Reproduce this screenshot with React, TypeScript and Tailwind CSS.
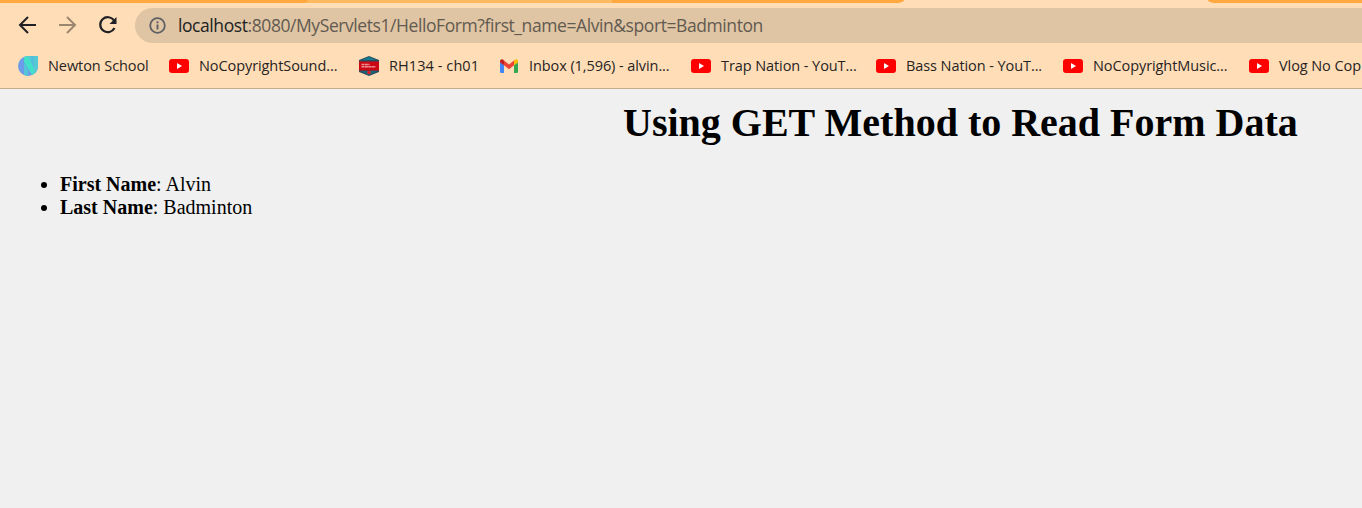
import type { ReactNode } from 'react';

function YouTubeIcon() {
  return (
    <svg width="20" height="20" viewBox="0 0 20 20">
      <rect x="0" y="3" width="20" height="14" rx="3" fill="#f00" />
      <path d="M8 7v6l5-3z" fill="#fff" />
    </svg>
  );
}

function NewtonIcon() {
  return (
    <svg width="20" height="20" viewBox="0 0 20 20">
      <path d="M10 0h10v10a10 10 0 1 1-10-10z" fill="#6c9be8" />
      <path d="M10 0h10v10a10 10 0 0 1-4 8z" fill="#55c8d4" />
      <path d="M6 1l4-1 6 13v5l-2 1L6 6z" fill="#42e0c8" />
      <path d="M6 6l4 8v6q-2 0-4-1z" fill="#52c5d8" />
      <path d="M13 0h3v12l-3-6z" fill="#52bfdc" />
    </svg>
  );
}

function BadgeIcon() {
  return (
    <svg width="20" height="20" viewBox="0 0 20 20">
      <path d="M10 0l10 4v12l-10 4-10-4V4z" fill="#264e60" />
      <path d="M10 1l7 3H3z" fill="#167c91" />
      <path d="M2 15h16l-8 4z" fill="#17677c" />
      <rect x="0" y="5.500" width="20" height="9" fill="#cc0815" />
      <path d="M2.500 8.500h8M2.500 10.700h14" stroke="#eb9296" strokeWidth="1.400" strokeDasharray="3 .4" />
      <circle cx="10" cy="16.500" r="1.800" fill="#e31c23" />
    </svg>
  );
}

function GmailIcon() {
  return (
    <svg width="20" height="20" viewBox="0 0 20 20">
      <path d="M1 6l4 3v8H2.300Q1 17 1 15.700z" fill="#4285f4" />
      <path d="M15 9l4-3v9.700q0 1.300-1.300 1.300H15z" fill="#34a853" />
      <path d="M5 4.500l5 4 5-4V9.300l-5 3.900-5-3.900z" fill="#ea4335" />
      <path d="M1 5.500C1 3 3.500 2.500 5 4.500v4.800L1 6.500z" fill="#c5221f" />
      <path d="M15 4.500c1.500-2 4-1.500 4 1v1l-4 2.800z" fill="#fbbc04" />
    </svg>
  );
}

function Bookmark({ icon, label, className }: { icon: ReactNode; label: string; className: string }) {
  return (
    <div className={`flex shrink-0 items-center whitespace-nowrap ${className}`}>
      <span className="mr-2.5 shrink-0">{icon}</span>
      <span>{label}</span>
    </div>
  );
}

export default function App() {
  return (
    <div className="flex h-[508px] w-full flex-col overflow-hidden bg-[#f0f0f0]">
      <header className="h-[89px] shrink-0 overflow-hidden border-b border-[#c8ab8a] bg-[#ffdeb7] font-['Open_Sans',sans-serif]">
        <div className="flex h-[3px] items-end overflow-hidden">
          <div className="h-[3px] w-[612px] shrink-0 bg-[#ffb95f]">
            <div className="h-[3px] w-[308px] rounded-br-[6px_3px] bg-[#ffa83f]" />
          </div>
          <div className="h-[3px] w-[292px] shrink-0 rounded-br-[7px_3px] bg-[#ffa83f]" />
          <div className="h-[3px] w-[304px] shrink-0" />
          <div className="h-[3px] grow rounded-bl-[7px_3px] bg-[#ffa83f]" />
        </div>
        <div className="flex h-[45px] items-center">
          <svg className="shrink-0" width="135" height="45" viewBox="0 3 135 45" fill="none">
            <path d="M36 25H20.500M28 17l-8 8 8 8" stroke="#202124" strokeWidth="2" />
            <path d="M59 25h15.500M67 17l8 8-8 8" stroke="#9b8770" strokeWidth="2" />
            <path d="M114 20.500a7.500 7.500 0 1 0 .5 7.500" stroke="#202124" strokeWidth="2.200" />
            <path d="M116.500 17v7h-7z" fill="#202124" />
          </svg>
          <div className="flex h-[35px] grow items-center rounded-l-full bg-[#dfc5a3]">
            <svg className="ml-[14px] mr-[12px] shrink-0" width="17" height="17" viewBox="0 0 17 17" fill="none">
              <circle cx="8.500" cy="8.500" r="7.300" stroke="#5f6065" strokeWidth="1.800" />
              <path d="M8.500 7.500v5M8.500 4.300v1.900" stroke="#5f6065" strokeWidth="1.900" />
            </svg>
            <span className="whitespace-nowrap text-[17.5px] tracking-[-0.42px] text-[#625a51]">
              <span className="text-[#202124]">localhost</span>:8080/MyServlets1/HelloForm?first_name=Alvin&amp;sport=Badminton
            </span>
          </div>
        </div>
        <nav className="flex h-[36px] items-center pl-[18px] text-[14.5px] tracking-[-0.08px] text-[#27231f]">
          <Bookmark icon={<NewtonIcon />} label="Newton School" className="w-[151px]" />
          <Bookmark icon={<YouTubeIcon />} label="NoCopyrightSound..." className="w-[190px]" />
          <Bookmark icon={<BadgeIcon />} label="RH134 - ch01" className="w-[140px] tracking-[0.08px]" />
          <Bookmark icon={<GmailIcon />} label="Inbox (1,596) - alvin..." className="w-[192px]" />
          <Bookmark icon={<YouTubeIcon />} label="Trap Nation - YouT..." className="w-[185px]" />
          <Bookmark icon={<YouTubeIcon />} label="Bass Nation - YouT..." className="w-[187px]" />
          <Bookmark icon={<YouTubeIcon />} label="NoCopyrightMusic..." className="w-[186px]" />
          <Bookmark icon={<YouTubeIcon />} label="Vlog No Cop" className="w-[113px]" />
        </nav>
      </header>
      <main className="font-['Liberation_Serif',serif] text-black">
        <h1 className="ml-[623px] mt-[11px] whitespace-nowrap text-[40px] font-bold leading-[46px]">
          Using GET Method to Read Form Data
        </h1>
        <ul className="mt-[27px] list-disc pl-[60px] text-[20px] leading-[23px]">
          <li><b>First Name</b>: Alvin</li>
          <li><b>Last Name</b>: Badminton</li>
        </ul>
      </main>
    </div>
  );
}
